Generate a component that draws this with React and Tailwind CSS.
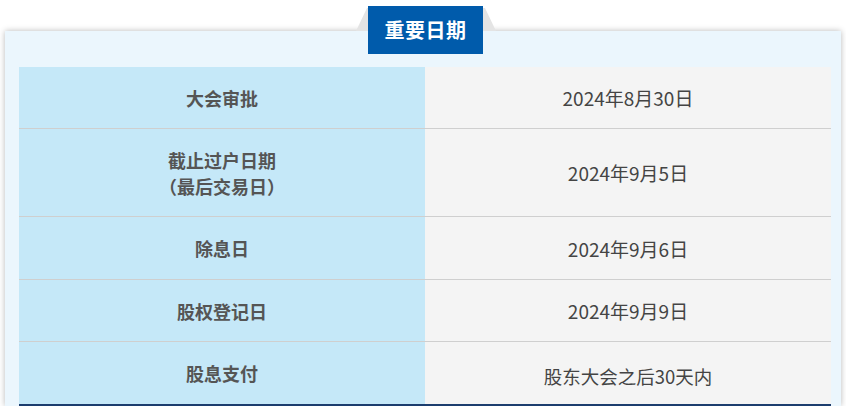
const rows = [
  { label: ["大会审批"], value: "2024年8月30日", h: "h-[62px]" },
  { label: ["截止过户日期", "（最后交易日）"], value: "2024年9月5日", h: "h-[88px]" },
  { label: ["除息日"], value: "2024年9月6日", h: "h-[63px]" },
  { label: ["股权登记日"], value: "2024年9月9日", h: "h-[62px]" },
];

export default function App() {
  return (
    <div
      className="h-[406px] bg-white pt-[31px] overflow-hidden"
      style={{ fontFamily: '"Noto Sans CJK SC", "Noto Sans", sans-serif' }}
    >
      <div className="relative mx-[5px] bg-[#ebf6fd] shadow-[0_0_6px_rgba(0,0,0,0.28)] pt-[36px] pl-[14px]">
        {/* 标题 tab */}
        <div className="absolute left-[351px] top-[-23px] w-[140px] h-[23px] bg-[#e4e4e4] [clip-path:polygon(11px_0,129px_0,140px_100%,0_100%)]" />
        <div className="absolute left-[363px] top-[-25px] w-[115px] h-[48px] bg-[#005bab] flex items-center justify-center">
          <span className="text-white text-[20px] font-bold tracking-[0.5px]">重要日期</span>
        </div>

        {/* 表格 */}
        <div className="w-[812px]">
          {rows.map((r, i) => (
            <div key={i} className={`grid grid-cols-2 border-b border-[#cfcfcf] ${r.h}`}>
              <div className="bg-[#c5e8f8] flex flex-col items-center justify-center text-[#555] text-[18px] font-bold leading-[26px]">
                {r.label.map((t) => (
                  <span key={t}>{t}</span>
                ))}
              </div>
              <div className="bg-[#f4f4f4] flex items-center justify-center text-[#444] text-[19px] pt-[2px]">
                {r.value}
              </div>
            </div>
          ))}
          <div className="grid grid-cols-2 h-[64px] border-b-2 border-[#1c3d6e]">
            <div className="bg-[#c5e8f8] flex items-center justify-center text-[#555] text-[18px] font-bold">
              股息支付
            </div>
            <div className="bg-[#f4f4f4] flex items-center justify-center text-[#444] text-[18.5px] pt-[8px]">
              股东大会之后30天内
            </div>
          </div>
        </div>
      </div>
    </div>
  );
}
